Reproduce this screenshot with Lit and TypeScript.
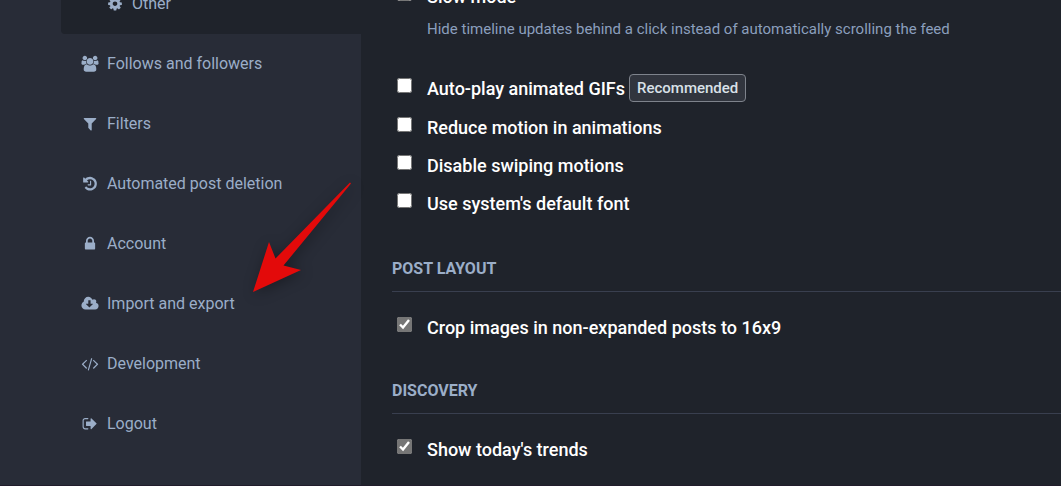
import { LitElement, html, css, svg } from "lit";
import { customElement, property } from "lit/decorators.js";

const glyphs: Record<string, string> = {
  cog: "M1152 896q0-106-75-181t-181-75-181 75-75 181 75 181 181 75 181-75 75-181zm512-109v222q0 12-8 23t-20 13l-185 28q-19 54-39 91 35 50 107 138 10 12 10 25t-9 23q-27 37-99 108t-94 71q-12 0-26-9l-138-108q-44 23-91 38-16 136-29 186-7 28-36 28h-222q-14 0-24.5-8.5t-11.5-21.5l-28-184q-49-16-90-37l-141 107q-10 9-25 9-14 0-25-11-126-114-165-168-7-10-7-23 0-12 8-23 15-21 51-66.5t54-70.5q-27-50-41-99l-183-27q-13-2-21-12.5t-8-23.5v-222q0-12 8-23t19-13l186-28q14-46 39-92-40-57-107-138-10-12-10-24 0-10 9-23 26-36 98.5-107.5t94.5-71.5q13 0 26 10l138 107q44-23 91-38 16-136 29-186 7-28 36-28h222q14 0 24.5 8.5t11.5 21.5l28 184q49 16 90 37l142-107q9-9 24-9 13 0 25 10 129 119 165 170 7 8 7 22 0 12-8 23-15 21-51 66.5t-54 70.5q26 50 41 98l183 28q13 2 21 12.5t8 23.5z",
  users:
    "M593 896q-162 5-265 128h-134q-82 0-138-40.5t-56-118.5q0-353 124-353 6 0 43.5 21t97.5 42.5 119 21.5q67 0 133-23-5 37-5 66 0 139 81 256zm1071 637q0 120-73 189.5t-194 69.5h-874q-121 0-194-69.5t-73-189.5q0-53 3.5-103.5t14-109 26.5-108.5 43-97.5 62-81 85.5-53.5 111.5-20q10 0 43 21.5t73 48 107 48 135 21.5 135-21.5 107-48 73-48 43-21.5q61 0 111.5 20t85.5 53.5 62 81 43 97.5 26.5 108.5 14 109 3.5 103.5zm-1024-1277q0 106-75 181t-181 75-181-75-75-181 75-181 181-75 181 75 75 181zm704 384q0 159-112.5 271.5t-271.5 112.5-271.5-112.5-112.5-271.5 112.5-271.5 271.5-112.5 271.5 112.5 112.5 271.5zm576 225q0 78-56 118.5t-138 40.5h-134q-103-123-265-128 81-117 81-256 0-29-5-66 66 23 133 23 59 0 119-21.5t97.5-42.5 43.5-21q124 0 124 353zm-128-609q0 106-75 181t-181 75-181-75-75-181 75-181 181-75 181 75 75 181z",
  filter:
    "M1595 295q17 41-14 70l-493 493v742q0 42-39 59-13 5-25 5-27 0-45-19l-256-256q-19-19-19-45v-486l-493-493q-31-29-14-70 17-39 59-39h1280q42 0 59 39z",
  history:
    "M1664 896q0 156-61 298t-164 245-245 164-298 61q-172 0-327-72.5t-264-204.5q-7-10-6.5-22.5t8.5-20.5l137-138q10-9 25-9 16 2 23 12 73 95 179 147t225 52q104 0 198.5-40.5t163.5-109.5 109.5-163.5 40.5-198.5-40.5-198.5-109.5-163.5-163.5-109.5-198.5-40.5q-98 0-188 35.5t-160 101.5l137 138q31 30 14 69-17 40-59 40h-448q-26 0-45-19t-19-45v-448q0-42 40-59 39-17 69 14l130 129q107-101 244.5-156.5t284.5-55.5q156 0 298 61t245 164 164 245 61 298zm-640-288v448q0 14-9 23t-23 9h-320q-14 0-23-9t-9-23v-64q0-14 9-23t23-9h224v-352q0-14 9-23t23-9h64q14 0 23 9t9 23z",
  lock: "M640 768h512v-192q0-106-75-181t-181-75-181 75-75 181v192zm832 96v576q0 40-28 68t-68 28h-960q-40 0-68-28t-28-68v-576q0-40 28-68t68-28h32v-192q0-184 132-316t316-132 316 132 132 316v192h32q40 0 68 28t28 68z",
  cloud:
    "M1216 928q0-14-9-23t-23-9h-224v-352q0-13-9.5-22.5t-22.5-9.5h-192q-13 0-22.5 9.5t-9.5 22.5v352h-224q-13 0-22.5 9.5t-9.5 22.5q0 14 9 23l352 352q9 9 23 9t23-9l351-351q10-12 10-24zm640 224q0 159-112.5 271.5t-271.5 112.5h-1088q-185 0-316.5-131.5t-131.5-316.5q0-130 70-240t188-165q-2-30-2-43 0-212 150-362t362-150q156 0 285.5 87t188.5 231q71-62 166-62 106 0 181 75t75 181q0 76-41 138 130 31 213.5 135.5t83.5 238.5z",
  code: "M553 1399l-50 50q-10 10-23 10t-23-10l-466-466q-10-10-10-23t10-23l466-466q10-10 23-10t23 10l50 50q10 10 10 23t-10 23l-393 393 393 393q10 10 10 23t-10 23zm591-1067l-373 1291q-4 13-15.5 19.5t-23.5 2.5l-62-17q-13-4-19.5-15.5t-2.5-24.5l373-1291q4-13 15.5-19.5t23.5-2.5l62 17q13 4 19.5 15.5t2.5 24.5zm657 651l-466 466q-10 10-23 10t-23-10l-50-50q-10-10-10-23t10-23l393-393-393-393q-10-10-10-23t10-23l50-50q10-10 23-10t23 10l466 466q10 10 10 23t-10 23z",
  logout:
    "M704 1440q0 4 1 20t.5 26.5-3 23.5-10 19.5-20.5 6.5h-320q-119 0-203.5-84.5t-84.5-203.5v-704q0-119 84.5-203.5t203.5-84.5h320q13 0 22.5 9.5t9.5 22.5q0 4 1 20t.5 26.5-3 23.5-10 19.5-20.5 6.5h-320q-66 0-113 47t-47 113v704q0 66 47 113t113 47h312l11.5 1 11.5 3 8 5.5 7 9 2 13.5zm928-544q0 26-19 45l-544 544q-19 19-45 19t-45-19-19-45v-288h-448q-26 0-45-19t-19-45v-384q0-26 19-45t45-19h448v-288q0-26 19-45t45-19 45 19l544 544q19 19 19 45z",
};

@customElement("nav-item")
class NavItem extends LitElement {
  @property() icon = "cog";
  @property() label = "";

  static styles = css`
    :host {
      display: block;
    }
    .link {
      display: flex;
      align-items: center;
      gap: 8px;
      padding: 20px;
      font-size: 16px;
      line-height: 20px;
      color: #9baec8;
      text-decoration: none;
    }
    .icon {
      flex: none;
      width: 18px;
      height: 16px;
      fill: currentColor;
      overflow: visible;
    }
  `;

  render() {
    const left = this.icon === "users" ? -48 : -112;
    return html`<a class="link" href="#">
      <svg class="icon" viewBox="${left} 32 2016 1792" aria-hidden="true">
        ${svg`<path d=${glyphs[this.icon]}></path>`}
      </svg>
      <span>${this.label}</span>
    </a>`;
  }
}

@customElement("check-option")
class CheckOption extends LitElement {
  @property() label = "";
  @property() badge = "";
  @property() hint = "";
  @property({ type: Boolean }) checked = false;

  static styles = css`
    :host {
      display: block;
    }
    .row {
      display: flex;
      align-items: flex-start;
      padding-left: 5px;
    }
    .box {
      flex: none;
      width: 15px;
      height: 15px;
      margin: 2px 15px 0 0;
      accent-color: #767676;
    }
    .badged .box {
      margin-top: 4px;
    }
    .label {
      display: flex;
      align-items: center;
      gap: 4px;
      font-size: 18px;
      font-weight: 500;
      line-height: 25px;
      color: #fff;
    }
    .badge {
      padding: 3px 7px;
      border: 1px solid #7e838c;
      border-radius: 4px;
      background: #31353e;
      color: #d9e1e8;
      font-size: 15px;
      line-height: 20px;
    }
    .hint {
      margin: 10px 0 0 35px;
      font-size: 15px;
      line-height: 20px;
      color: #8b9fbd;
    }
  `;

  render() {
    return html`
      <div class="row ${this.badge ? "badged" : ""}">
        <input class="box" id="box" type="checkbox" .checked=${this.checked} />
        <label class="label" for="box">
          <span>${this.label}</span>
          ${this.badge ? html`<span class="badge">${this.badge}</span>` : ""}
        </label>
      </div>
      ${this.hint ? html`<p class="hint">${this.hint}</p>` : ""}
    `;
  }
}

@customElement("app-root")
class AppRoot extends LitElement {
  static styles = css`
    :host {
      display: block;
      box-sizing: border-box;
      height: 100vh;
      overflow: hidden;
      position: relative;
      border-bottom: 1px solid #211c2b;
      font-family: Roboto, sans-serif;
      background: #1f232b;
    }
    .page {
      display: grid;
      grid-template-columns: 361px minmax(0, 1fr);
      min-height: 100%;
    }
    .sidebar {
      padding-left: 61px;
      background: #282c37;
    }
    .submenu {
      margin-top: -26px;
      padding-left: 25px;
      background: #1f232b;
      border-radius: 0 0 0 4px;
    }
    .content {
      margin-top: -16px;
      padding-left: 31px;
    }
    .group {
      display: flex;
      flex-direction: column;
      gap: 13px;
      padding-bottom: 2px;
    }
    .motion {
      margin-top: 35px;
    }
    .heading {
      margin: 41px 0 23px;
      padding-bottom: 12px;
      border-bottom: 1px solid #393f4f;
      font-size: 16px;
      font-weight: 700;
      line-height: 20px;
      text-transform: uppercase;
      color: #9baec8;
    }
    .arrow {
      position: absolute;
      left: 240px;
      top: 170px;
      width: 130px;
      height: 135px;
      fill: #e30a0a;
      filter: drop-shadow(2px 2px 7px rgba(0, 0, 0, 0.35));
      pointer-events: none;
    }
  `;

  render() {
    return html`
      <div class="page">
        <nav class="sidebar">
          <div class="submenu"><nav-item icon="cog" label="Other"></nav-item></div>
          <nav-item icon="users" label="Follows and followers"></nav-item>
          <nav-item icon="filter" label="Filters"></nav-item>
          <nav-item icon="history" label="Automated post deletion"></nav-item>
          <nav-item icon="lock" label="Account"></nav-item>
          <nav-item icon="cloud" label="Import and export"></nav-item>
          <nav-item icon="code" label="Development"></nav-item>
          <nav-item icon="logout" label="Logout"></nav-item>
        </nav>
        <main class="content">
          <check-option
            label="Slow mode"
            hint="Hide timeline updates behind a click instead of automatically scrolling the feed"
          ></check-option>
          <div class="group motion">
            <check-option label="Auto-play animated GIFs" badge="Recommended"></check-option>
            <check-option label="Reduce motion in animations"></check-option>
            <check-option label="Disable swiping motions"></check-option>
            <check-option label="Use system's default font"></check-option>
          </div>
          <h4 class="heading">Post layout</h4>
          <check-option label="Crop images in non-expanded posts to 16x9" checked></check-option>
          <h4 class="heading">Discovery</h4>
          <check-option label="Show today's trends" checked></check-option>
        </main>
      </div>
      <svg class="arrow" viewBox="0 0 130 135" aria-hidden="true">
        <path d="M110 12.5 L111 13.5 L43.5 95.5 L61 100 L13 122 L29 72 L35.5 88.5 Z"></path>
      </svg>
    `;
  }
}
